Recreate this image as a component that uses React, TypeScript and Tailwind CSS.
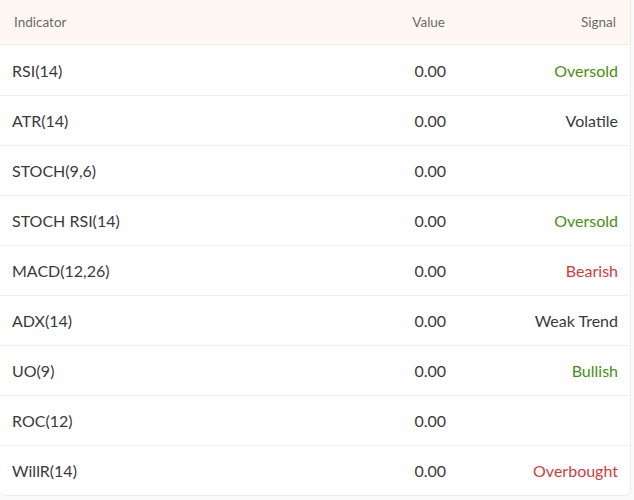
const ROWS: { name: string; value: string; signal: string; tone?: "up" | "down" | "neutral" }[] = [
  { name: "RSI(14)", value: "0.00", signal: "Oversold", tone: "up" },
  { name: "ATR(14)", value: "0.00", signal: "Volatile", tone: "neutral" },
  { name: "STOCH(9,6)", value: "0.00", signal: "" },
  { name: "STOCH RSI(14)", value: "0.00", signal: "Oversold", tone: "up" },
  { name: "MACD(12,26)", value: "0.00", signal: "Bearish", tone: "down" },
  { name: "ADX(14)", value: "0.00", signal: "Weak Trend", tone: "neutral" },
  { name: "UO(9)", value: "0.00", signal: "Bullish", tone: "up" },
  { name: "ROC(12)", value: "0.00", signal: "" },
  { name: "WillR(14)", value: "0.00", signal: "Overbought", tone: "down" },
];

const TONE: Record<string, string> = {
  up: "text-[#47900f]",
  down: "text-[#d23c3c]",
  neutral: "text-[#3a3a3a]",
};

export default function App() {
  return (
    <div className="min-h-[500px] bg-[#fafafa] font-['Lato','Noto_Sans',sans-serif]">
      <div className="w-[631px] overflow-hidden rounded-b-md border-r border-b border-[#ececec] bg-white">
        {/* header */}
        <div className="flex h-[45px] items-center bg-[#fff8f2] border-b border-[#f6ebe2] pl-[14px] pr-[14px] text-[13.5px] text-[#6a6a6a]">
          <div className="flex-1">Indicator</div>
          <div className="w-[120px] text-right">Value</div>
          <div className="w-[171px] text-right">Signal</div>
        </div>

        {ROWS.map((r, i) => (
          <div
            key={r.name}
            className={`flex h-[50px] items-center pl-[12px] pr-[12px] pt-px text-[16px] text-[#3a3a3a] ${
              i > 0 ? "border-t border-[#efefef]" : ""
            }`}
          >
            <div className="flex-1">{r.name}</div>
            <div className="w-[120px] text-right">{r.value}</div>
            <div className={`w-[172px] text-right ${r.tone ? TONE[r.tone] : ""}`}>
              {r.signal}
            </div>
          </div>
        ))}
      </div>
    </div>
  );
}
